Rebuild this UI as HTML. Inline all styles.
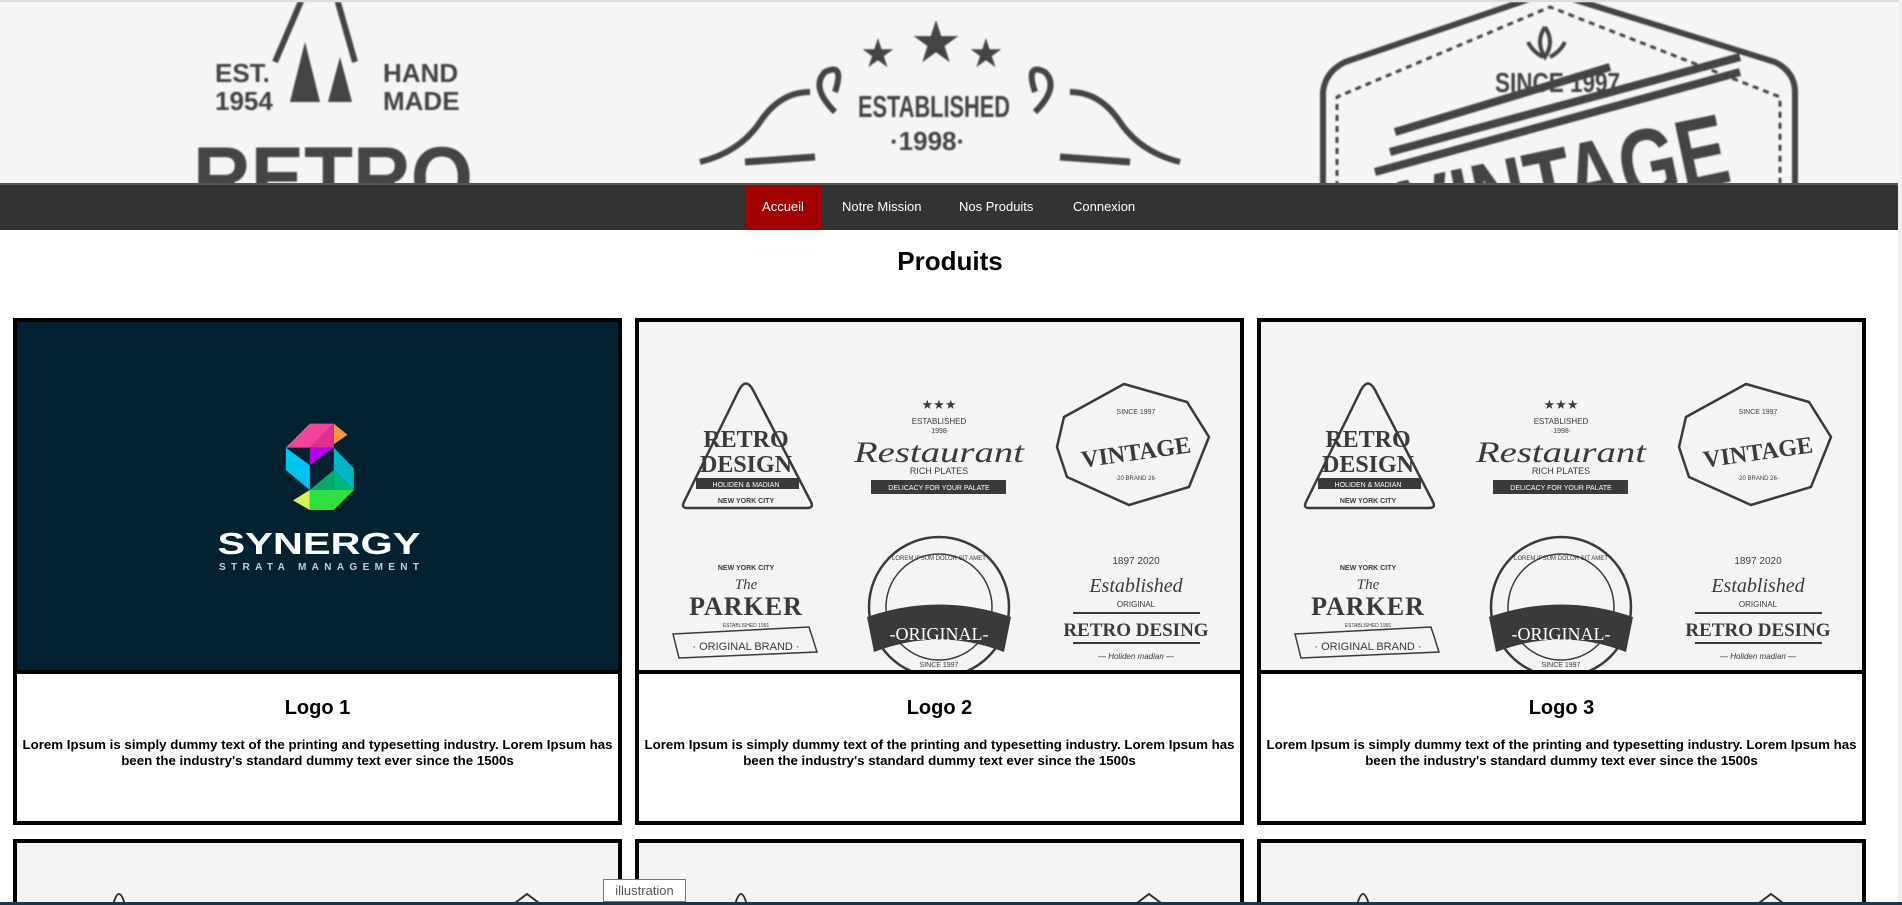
<!DOCTYPE html>
<html><head><meta charset="utf-8">
<style>
*{box-sizing:border-box;margin:0;padding:0}
html,body{width:1902px;height:905px;overflow:hidden;background:#fff;font-family:"Liberation Sans",Arial,sans-serif}
.hdr{position:absolute;left:0;top:0;width:1898px;height:183px;background:#f5f5f5;overflow:hidden;border-top:2px solid #ddd}
.nav{position:absolute;left:0;top:183px;width:1898px;height:47px;background:#333;border-top:2px solid #555}
.nav a{position:absolute;top:0;height:45px;line-height:43px;color:#fff;font-size:13px;text-decoration:none}
h1{position:absolute;top:246px;left:0;width:1900px;text-align:center;font-size:26px;font-weight:bold;color:#000}
.card{position:absolute;width:609px;height:507px;border:4px solid #000;background:#fff;overflow:hidden}
.card .img{position:absolute;left:0;top:0;width:601px;height:352px;border-bottom:4px solid #000;overflow:hidden;background:#f4f4f4}
.card h2{position:absolute;top:375px;left:0;width:601px;text-align:center;font-size:20px;font-weight:bold}
.card p{position:absolute;top:415px;left:2px;width:597px;text-align:center;font-size:13.3px;line-height:16px;font-weight:bold}
.r2{height:66px;border-bottom:none}
.r2 .img{border-bottom:none;height:70px}
.sb{position:absolute;right:0;top:0;width:4px;height:905px;background:#f0f0f0}
.bb{position:absolute;left:0;top:902px;width:1902px;height:3px;background:#1e3643}
.tip{position:absolute;left:603px;top:879px;width:83px;height:23px;background:#fff;border:1px solid #767676;font-size:13px;line-height:21px;text-align:center;color:#555}
</style></head><body>
<div class="hdr">
<svg width="1898" height="183" viewBox="0 0 1898 183" font-family="Liberation Sans,sans-serif" fill="#444" style="filter:blur(0.8px)">
<line x1="275" y1="60" x2="305" y2="-10" stroke="#444" stroke-width="6"/>
<line x1="355" y1="60" x2="335" y2="-10" stroke="#444" stroke-width="6"/>
<polygon points="305,40 290,100 320,100" /><polygon points="340,55 328,100 352,100"/>
<text x="215" y="80" font-size="26" font-weight="bold">EST.</text>
<text x="215" y="108" font-size="26" font-weight="bold">1954</text>
<text x="383" y="80" font-size="26" font-weight="bold">HAND</text>
<text x="383" y="108" font-size="26" font-weight="bold">MADE</text>
<text x="193" y="205" font-size="86" font-weight="bold" textLength="280" lengthAdjust="spacingAndGlyphs">RETRO</text>
<text x="860" y="65" font-size="40">★</text><text x="910" y="60" font-size="58">★</text><text x="968" y="65" font-size="40">★</text>
<text x="858" y="115" font-size="31" font-weight="bold" textLength="152" lengthAdjust="spacingAndGlyphs">ESTABLISHED</text>
<text x="890" y="148" font-size="26" font-weight="bold">·1998·</text>
<path d="M835 110 q-25 -25 -10 -40 q20 -10 10 20 M700 160 q40 -10 60 -40 q20 -30 50 -30 M1035 110 q25 -25 10 -40 q-20 -10 -10 20 M1180 160 q-40 -10 -60 -40 q-20 -30 -50 -30" stroke="#444" stroke-width="6" fill="none"/>
<path d="M745 160 l70 -5 M1060 155 l70 5" stroke="#444" stroke-width="7" fill="none"/>
<path d="M1323 185 L1323 90 Q1325 70 1345 60 L1550 -10 L1775 60 Q1795 70 1795 90 L1795 185" stroke="#444" stroke-width="6" fill="none"/>
<path d="M1337 185 L1337 95 L1550 5 L1780 95 L1780 185" stroke="#444" stroke-width="3" stroke-dasharray="6 5" fill="none"/>
<text x="1495" y="90" font-size="28" font-weight="bold" textLength="125" lengthAdjust="spacingAndGlyphs">SINCE 1997</text>
<path d="M1395 130 L1610 65 M1390 150 L1740 55 M1375 170 L1740 70" stroke="#444" stroke-width="8"/>
<text x="1400" y="215" font-size="100" font-weight="bold" textLength="330" lengthAdjust="spacingAndGlyphs" transform="rotate(-12 1560 180)">VINTAGE</text>
<path d="M1545 25 q10 15 0 30 q-10 -15 0 -30 M1528 40 q5 10 15 15 M1565 40 q-5 10 -15 15" stroke="#444" stroke-width="4" fill="none"/>
</svg>
</div>
<div class="nav">
<a style="left:745px;width:76px;background:#a30000;text-align:center">Accueil</a>
<a style="left:842px">Notre Mission</a>
<a style="left:959px">Nos Produits</a>
<a style="left:1073px">Connexion</a>
</div>
<h1>Produits</h1>

<div class="card" style="left:13px;top:318px"><div class="img" style="background:#022232">
<svg width="601" height="352" viewBox="0 0 601 352">
<g transform="translate(60,4) scale(0.8)">
<polygon points="261,152 291,122 321,122 291,152" fill="#f0459a"/>
<polygon points="321,122 338,136 321,148" fill="#f7963e"/>
<polygon points="291,152 321,152 321,122" fill="#e0308e"/>
<polygon points="291,152 321,152 291,174" fill="#b800e8"/>
<polygon points="261,152 291,174 291,205 261,180" fill="#00c5ef"/>
<polygon points="321,152 346,178 346,205 321,180" fill="#00b8c8"/>
<polygon points="291,205 321,180 321,205" fill="#0ba86a"/>
<polygon points="321,180 346,205 321,205" fill="#00b87a"/>
<polygon points="291,205 346,205 321,230 291,230" fill="#30df40"/>
<polygon points="270,218 291,205 291,230" fill="#d6f05a"/>
</g>
<text x="302" y="232" fill="#fff" font-family="Liberation Sans,sans-serif" font-size="31" font-weight="bold" text-anchor="middle" textLength="203" lengthAdjust="spacingAndGlyphs">SYNERGY</text>
<text x="302" y="248" fill="#c8ccd0" font-family="Liberation Sans,sans-serif" font-size="10" font-weight="bold" text-anchor="middle" textLength="200" lengthAdjust="spacing">STRATA MANAGEMENT</text>
</svg></div>
<h2>Logo 1</h2>
<p>Lorem Ipsum is simply dummy text of the printing and typesetting industry. Lorem Ipsum has been the industry's standard dummy text ever since the 1500s</p></div>

<div class="card" style="left:635px;top:318px"><div class="img">
<svg width="601" height="352" viewBox="0 0 601 352" font-family="Liberation Sans,sans-serif" fill="#3a3a3a" text-anchor="middle">
<path d="M45 180 L100 68 Q107 55 114 68 L172 180 Q175 186 168 186 L48 186 Q42 186 45 180Z" fill="none" stroke="#3a3a3a" stroke-width="2.5"/>
<text x="107" y="125" font-size="24" font-weight="bold" font-family="Liberation Serif,serif">RETRO</text>
<text x="107" y="150" font-size="24" font-weight="bold" font-family="Liberation Serif,serif">DESIGN</text>
<rect x="57" y="156" width="103" height="11"/>
<text x="107" y="165" font-size="7" fill="#fff">HOLIDEN &amp; MADIAN</text>
<text x="107" y="181" font-size="7" font-weight="bold">NEW YORK CITY</text>
<text x="300" y="87" font-size="13">★★★</text>
<text x="300" y="102" font-size="8">ESTABLISHED</text><text x="300" y="111" font-size="7">·1998·</text>
<text x="300" y="140" font-size="30" font-style="italic" font-family="Liberation Serif,serif" textLength="170" lengthAdjust="spacingAndGlyphs">Restaurant</text>
<text x="300" y="152" font-size="9">RICH PLATES</text>
<path d="M232 158 L367 158 L367 172 L232 172Z"/>
<text x="300" y="168" font-size="7" fill="#fff">DELICACY FOR YOUR PALATE</text>
<path d="M425 95 L485 62 L548 80 L570 115 L550 165 L490 183 L428 155 L418 125Z" fill="none" stroke="#3a3a3a" stroke-width="2.5"/>
<text x="497" y="92" font-size="7">SINCE 1997</text>
<text x="497" y="138" font-size="24" font-weight="bold" font-family="Liberation Serif,serif" transform="rotate(-8 497 130)">VINTAGE</text>
<text x="497" y="158" font-size="6">·20 BRAND 26·</text>
<text x="107" y="248" font-size="7" font-weight="bold">NEW YORK CITY</text>
<text x="107" y="267" font-size="15" font-style="italic" font-family="Liberation Serif,serif">The</text>
<text x="107" y="293" font-size="26" font-weight="bold" font-family="Liberation Serif,serif" letter-spacing="1">PARKER</text>
<text x="107" y="305" font-size="5">ESTABLISHED 1991</text>
<path d="M34 312 L170 305 L178 330 L40 336Z" fill="none" stroke="#3a3a3a" stroke-width="1.5"/>
<text x="107" y="328" font-size="11">· ORIGINAL BRAND ·</text>
<circle cx="300" cy="285" r="70" fill="none" stroke="#3a3a3a" stroke-width="2.5"/>
<circle cx="300" cy="285" r="53" fill="none" stroke="#3a3a3a" stroke-width="1.5"/>
<path d="M228 295 Q300 270 372 295 L365 330 Q300 305 235 330Z"/>
<text x="300" y="318" font-size="18" fill="#fff" font-family="Liberation Serif,serif">-ORIGINAL-</text>
<text x="300" y="345" font-size="7">SINCE 1997</text>
<text x="300" y="238" font-size="6">LOREM IPSUM DOLOR SIT AMET</text>
<text x="497" y="242" font-size="10">1897  2020</text>
<text x="497" y="270" font-size="20" font-style="italic" font-family="Liberation Serif,serif">Established</text>
<text x="497" y="285" font-size="8">ORIGINAL</text>
<rect x="434" y="290" width="127" height="2"/>
<text x="497" y="314" font-size="19" font-weight="bold" font-family="Liberation Serif,serif">RETRO DESING</text>
<rect x="434" y="320" width="127" height="2"/>
<text x="497" y="337" font-size="8" font-style="italic">— Holiden madian —</text>
</svg></div>
<h2>Logo 2</h2>
<p>Lorem Ipsum is simply dummy text of the printing and typesetting industry. Lorem Ipsum has been the industry's standard dummy text ever since the 1500s</p></div>

<div class="card" style="left:1257px;top:318px"><div class="img">
<svg width="601" height="352" viewBox="0 0 601 352" font-family="Liberation Sans,sans-serif" fill="#3a3a3a" text-anchor="middle">
<path d="M45 180 L100 68 Q107 55 114 68 L172 180 Q175 186 168 186 L48 186 Q42 186 45 180Z" fill="none" stroke="#3a3a3a" stroke-width="2.5"/>
<text x="107" y="125" font-size="24" font-weight="bold" font-family="Liberation Serif,serif">RETRO</text>
<text x="107" y="150" font-size="24" font-weight="bold" font-family="Liberation Serif,serif">DESIGN</text>
<rect x="57" y="156" width="103" height="11"/>
<text x="107" y="165" font-size="7" fill="#fff">HOLIDEN &amp; MADIAN</text>
<text x="107" y="181" font-size="7" font-weight="bold">NEW YORK CITY</text>
<text x="300" y="87" font-size="13">★★★</text>
<text x="300" y="102" font-size="8">ESTABLISHED</text><text x="300" y="111" font-size="7">·1998·</text>
<text x="300" y="140" font-size="30" font-style="italic" font-family="Liberation Serif,serif" textLength="170" lengthAdjust="spacingAndGlyphs">Restaurant</text>
<text x="300" y="152" font-size="9">RICH PLATES</text>
<path d="M232 158 L367 158 L367 172 L232 172Z"/>
<text x="300" y="168" font-size="7" fill="#fff">DELICACY FOR YOUR PALATE</text>
<path d="M425 95 L485 62 L548 80 L570 115 L550 165 L490 183 L428 155 L418 125Z" fill="none" stroke="#3a3a3a" stroke-width="2.5"/>
<text x="497" y="92" font-size="7">SINCE 1997</text>
<text x="497" y="138" font-size="24" font-weight="bold" font-family="Liberation Serif,serif" transform="rotate(-8 497 130)">VINTAGE</text>
<text x="497" y="158" font-size="6">·20 BRAND 26·</text>
<text x="107" y="248" font-size="7" font-weight="bold">NEW YORK CITY</text>
<text x="107" y="267" font-size="15" font-style="italic" font-family="Liberation Serif,serif">The</text>
<text x="107" y="293" font-size="26" font-weight="bold" font-family="Liberation Serif,serif" letter-spacing="1">PARKER</text>
<text x="107" y="305" font-size="5">ESTABLISHED 1991</text>
<path d="M34 312 L170 305 L178 330 L40 336Z" fill="none" stroke="#3a3a3a" stroke-width="1.5"/>
<text x="107" y="328" font-size="11">· ORIGINAL BRAND ·</text>
<circle cx="300" cy="285" r="70" fill="none" stroke="#3a3a3a" stroke-width="2.5"/>
<circle cx="300" cy="285" r="53" fill="none" stroke="#3a3a3a" stroke-width="1.5"/>
<path d="M228 295 Q300 270 372 295 L365 330 Q300 305 235 330Z"/>
<text x="300" y="318" font-size="18" fill="#fff" font-family="Liberation Serif,serif">-ORIGINAL-</text>
<text x="300" y="345" font-size="7">SINCE 1997</text>
<text x="300" y="238" font-size="6">LOREM IPSUM DOLOR SIT AMET</text>
<text x="497" y="242" font-size="10">1897  2020</text>
<text x="497" y="270" font-size="20" font-style="italic" font-family="Liberation Serif,serif">Established</text>
<text x="497" y="285" font-size="8">ORIGINAL</text>
<rect x="434" y="290" width="127" height="2"/>
<text x="497" y="314" font-size="19" font-weight="bold" font-family="Liberation Serif,serif">RETRO DESING</text>
<rect x="434" y="320" width="127" height="2"/>
<text x="497" y="337" font-size="8" font-style="italic">— Holiden madian —</text>
</svg></div>
<h2>Logo 3</h2>
<p>Lorem Ipsum is simply dummy text of the printing and typesetting industry. Lorem Ipsum has been the industry's standard dummy text ever since the 1500s</p></div>

<div class="card r2" style="left:13px;top:839px"><div class="img"><svg width="601" height="70"><path d="M95 66 q7 -30 14 0" stroke="#333" stroke-width="2" fill="none"/><path d="M490 66 l20 -15 l20 15" stroke="#333" stroke-width="2" fill="none"/></svg></div></div>
<div class="card r2" style="left:635px;top:839px"><div class="img"><svg width="601" height="70"><path d="M95 66 q7 -30 14 0" stroke="#333" stroke-width="2" fill="none"/><path d="M490 66 l20 -15 l20 15" stroke="#333" stroke-width="2" fill="none"/></svg></div></div>
<div class="card r2" style="left:1257px;top:839px"><div class="img"><svg width="601" height="70"><path d="M95 66 q7 -30 14 0" stroke="#333" stroke-width="2" fill="none"/><path d="M490 66 l20 -15 l20 15" stroke="#333" stroke-width="2" fill="none"/></svg></div></div>

<div class="sb"></div>
<div class="bb"></div>
<div class="tip">illustration</div>
</body></html>
